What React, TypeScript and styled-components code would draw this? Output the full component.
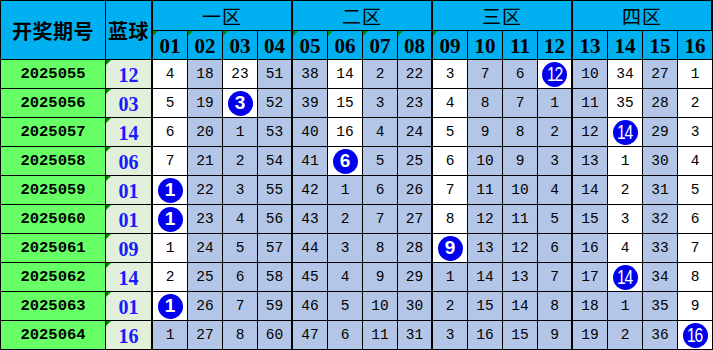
import React from "react";
import styled, { createGlobalStyle, css } from "styled-components";

const GlobalStyle = createGlobalStyle`
  body {
    margin: 0;
    background: #ffffff;
  }
`;

const HEAD_BG = "#00b0f0";
const GREEN_BG = "#66ff66";
const BALL_BG = "#e2efda";
const BLUE_BG = "#b4c6e7";

const Grid = styled.div`
  display: grid;
  grid-template-columns: 105px 47px repeat(16, 35px);
  grid-template-rows: 30px 29px repeat(10, 29px);
  width: 713px;
  box-sizing: border-box;
  border-top: 1px solid #000;
  border-left: 1px solid #000;
`;

const Cell = styled.div<{ $bg: string; $thick?: boolean; $mark?: boolean }>`
  position: relative;
  box-sizing: border-box;
  display: flex;
  align-items: center;
  justify-content: center;
  background: ${(p) => p.$bg};
  border-right: ${(p) => (p.$thick ? 2 : 1)}px solid #000;
  border-bottom: 1px solid #000;
  color: #000;
  ${(p) =>
    p.$mark &&
    css`
      &::before {
        content: "";
        position: absolute;
        left: 0;
        top: 0;
        border-top: 5px solid #008a00;
        border-right: 5px solid transparent;
      }
    `}
`;

const TitleCell = styled(Cell)`
  grid-row: span 2;
  font-family: "Noto Sans CJK SC", sans-serif;
  font-weight: 700;
  font-size: 20px;
  letter-spacing: 0.5px;
`;

const ZoneCell = styled(Cell)`
  grid-column: span 4;
  font-family: "Noto Sans CJK SC", sans-serif;
  font-size: 19px;
  letter-spacing: 1px;
`;

const NumHead = styled(Cell)`
  font-family: "Liberation Serif", serif;
  font-weight: 700;
  font-size: 21px;
  padding-top: 2px;
`;

const Period = styled(Cell)`
  font-family: "Liberation Mono", monospace;
  font-weight: 700;
  font-size: 15.5px;
`;

const BlueNum = styled(Cell)`
  font-family: "Liberation Serif", serif;
  font-weight: 700;
  font-size: 20px;
  color: #1a1aff;
  padding-top: 2px;
`;

const Miss = styled(Cell)`
  font-family: "Liberation Mono", monospace;
  font-size: 14.5px;
`;

const Ball = styled.span<{ $two: boolean }>`
  display: flex;
  align-items: center;
  justify-content: center;
  width: 25px;
  height: 25px;
  border-radius: 50%;
  background: #0000ee;
  color: #fff;
  font-family: "Liberation Sans", Arial, sans-serif;
  font-weight: ${(p) => (p.$two ? 400 : 700)};
  font-size: ${(p) => (p.$two ? 20 : 19)}px;
  letter-spacing: ${(p) => (p.$two ? -1.5 : 0)}px;
`;

const Narrow = styled.span<{ $two: boolean }>`
  display: inline-block;
  transform: scaleX(${(p) => (p.$two ? 0.78 : 1)});
`;

const periods = [
  "2025055", "2025056", "2025057", "2025058", "2025059",
  "2025060", "2025061", "2025062", "2025063", "2025064",
];
const blues = [12, 3, 14, 6, 1, 1, 9, 14, 1, 16];
const firstRow = [4, 18, 23, 51, 38, 14, 2, 22, 3, 7, 6, 0, 10, 34, 27, 1];
const zones = ["一区", "二区", "三区", "四区"];
const marked = [1, 2, 3, 5, 6, 7, 8, 9];

const pad = (n: number) => (n < 10 ? "0" + n : String(n));

// omission values per column, counting up until the ball hits
const table = (() => {
  const rows: number[][] = [];
  const prev = firstRow.map((v) => v - 1);
  blues.forEach((b) => {
    const row = prev.map((p, i) => (i + 1 === b ? 0 : p + 1));
    row.forEach((v, i) => (prev[i] = v));
    rows.push(row);
  });
  return rows;
})();

// white down to the last hit in each column
const lastHit = Array.from({ length: 16 }, (_, i) => {
  let last = -1;
  blues.forEach((b, r) => {
    if (b === i + 1) last = r;
  });
  return last;
});

const thickAfter = (col: number) => col % 4 === 0;

export default function App() {
  return (
    <>
      <GlobalStyle />
      <Grid>
        <TitleCell $bg={HEAD_BG}>开奖期号</TitleCell>
        <TitleCell $bg={HEAD_BG} $thick>
          蓝球
        </TitleCell>
        {zones.map((z) => (
          <ZoneCell key={z} $bg={HEAD_BG} $thick>
            {z}
          </ZoneCell>
        ))}
        {Array.from({ length: 16 }, (_, i) => i + 1).map((n) => (
          <NumHead key={n} $bg={HEAD_BG} $thick={thickAfter(n) && n < 16} $mark={marked.includes(n)}>
            {pad(n)}
          </NumHead>
        ))}
        {table.map((row, r) => (
          <React.Fragment key={periods[r]}>
            <Period $bg={GREEN_BG}>{periods[r]}</Period>
            <BlueNum $bg={BALL_BG} $thick $mark>
              {pad(blues[r])}
            </BlueNum>
            {row.map((v, i) => {
              const n = i + 1;
              const white = r <= lastHit[i];
              return (
                <Miss key={n} $bg={white ? "#ffffff" : BLUE_BG} $thick={thickAfter(n) && n < 16}>
                  {v === 0 ? (
                    <Ball $two={n > 9}>
                      <Narrow $two={n > 9}>{n}</Narrow>
                    </Ball>
                  ) : (
                    v
                  )}
                </Miss>
              );
            })}
          </React.Fragment>
        ))}
      </Grid>
    </>
  );
}
